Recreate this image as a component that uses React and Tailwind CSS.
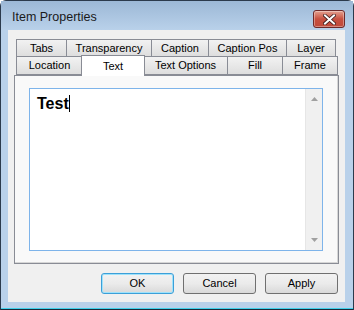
import React from "react";

const tabBase =
  "h-full flex items-center justify-center border border-[#898c95] bg-gradient-to-b from-[#f2f2f2] to-[#dedede] text-[11px] text-black -ml-px first:ml-0";

function Tab({ w, children }) {
  return (
    <div className={tabBase} style={{ width: w }}>
      {children}
    </div>
  );
}

export default function App() {
  const font = { fontFamily: '"Liberation Sans", Arial, sans-serif' };
  return (
    <div className="w-[354px] h-[310px] relative overflow-hidden" style={font}>
      <div className="w-full h-full flex flex-col border border-[#2b3a4c] rounded-t-[6px] bg-[#b9d1ea] border-b-0">
        {/* title bar */}
        <div className="h-[29px] flex items-start justify-between bg-gradient-to-b from-[#9cb8d6] to-[#b9d1ea] shrink-0">
          <div className="pl-[11px] pt-[10px] text-[12.5px] text-[#1a1a1a] leading-none">
            Item Properties
          </div>
          <div className="mt-[9px] mr-[8px] w-[32px] h-[18px] rounded-[3px] border border-[#6d2a2a] bg-gradient-to-b from-[#e3a090] via-[#c75040] to-[#c04a3a] flex items-center justify-center shadow-[inset_0_0_0_1px_rgba(255,255,255,0.35)]">
            <svg width="13" height="11" viewBox="0 0 13 11">
              <path
                d="M2 1.5 L11 9.5 M11 1.5 L2 9.5"
                stroke="#3a1a1a"
                strokeWidth="3.6"
                strokeLinecap="square"
              />
              <path
                d="M2 1.5 L11 9.5 M11 1.5 L2 9.5"
                stroke="#ffffff"
                strokeWidth="2"
                strokeLinecap="square"
              />
            </svg>
          </div>
        </div>
        {/* client area */}
        <div className="ml-[7px] w-[337px] h-[272px] bg-[#f0f0f0] flex flex-col shrink-0">
          <div className="pl-[6px] pt-[9px] flex flex-col">
            {/* row 1 */}
            <div className="h-[18px] flex pl-[2px]">
              <Tab w={51}>Tabs</Tab>
              <Tab w={86}>Transparency</Tab>
              <Tab w={58}>Caption</Tab>
              <Tab w={79}>Caption Pos</Tab>
              <Tab w={50}>Layer</Tab>
            </div>
            {/* row 2 */}
            <div className="h-[19px] flex pl-[2px] -mt-px relative z-10">
              <Tab w={67}>Location</Tab>
              <div className="w-[64px] h-[21px] -mt-[1px] -ml-[2px] -mr-[1px] border border-b-0 border-[#898c95] bg-white flex items-start justify-center pt-[2px] text-[11px] text-black relative z-20">
                Text
              </div>
              <Tab w={85}>Text Options</Tab>
              <Tab w={56}>Fill</Tab>
              <Tab w={56}>Frame</Tab>
            </div>
            {/* panel */}
            <div className="w-[325px] h-[189px] border border-[#898c95] bg-[#f9f9f9] pl-[14px] pt-[12px] shadow-[inset_-1px_-1px_0_#d6d6d6]">
              <div className="w-[294px] h-[163px] border border-[#7eb4ea] bg-white flex">
                <div className="flex-1 pl-[7px] pt-[3px]">
                  <span className="text-[16px] font-bold text-black leading-[18px]">
                    Test
                  </span>
                  <span className="inline-block w-px h-[17px] bg-black align-[-3px]" />
                </div>
                <div className="w-[17px] bg-[#f0f0f0] border-l border-[#e6e6e6] flex flex-col justify-between items-center py-[8px]">
                  <svg width="7" height="4" viewBox="0 0 7 4">
                    <path d="M0 4 L3.5 0 L7 4 Z" fill="#a0a0a0" />
                  </svg>
                  <svg width="7" height="4" viewBox="0 0 7 4">
                    <path d="M0 0 L7 0 L3.5 4 Z" fill="#a0a0a0" />
                  </svg>
                </div>
              </div>
            </div>
          </div>
          {/* buttons */}
          <div className="flex justify-end gap-[9px] pr-[7px] pt-[9px]">
            <button className="w-[73px] h-[21px] rounded-[3px] border border-[#3c9fd8] bg-gradient-to-b from-[#f2f2f2] via-[#ebebeb] to-[#d9d9d9] text-[11px] text-black shadow-[inset_0_0_0_1px_#9fe2fb]">
              OK
            </button>
            <button className="w-[73px] h-[21px] rounded-[3px] border border-[#707070] bg-gradient-to-b from-[#f2f2f2] via-[#ebebeb] to-[#d9d9d9] text-[11px] text-black">
              Cancel
            </button>
            <button className="w-[73px] h-[21px] rounded-[3px] border border-[#707070] bg-gradient-to-b from-[#f2f2f2] via-[#ebebeb] to-[#d9d9d9] text-[11px] text-black">
              Apply
            </button>
          </div>
        </div>
        <div className="flex-1" />
        <div className="h-px bg-[#3fd0ea]" />
        <div className="h-px bg-[#1b2a3a]" />
      </div>
    </div>
  );
}
